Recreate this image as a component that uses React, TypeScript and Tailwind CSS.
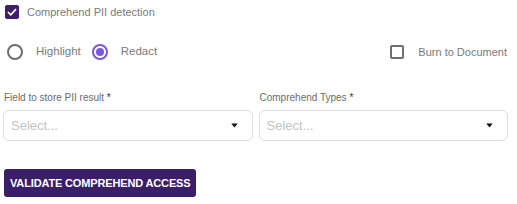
import React from 'react';

const Caret = () => (
    <svg width="7" height="5" viewBox="0 0 7 5" className="shrink-0">
        <path d="M0.3 0.5h6.4L3.5 4.6z" fill="#111" />
    </svg>
);

type SelectBoxProps = {
    label: string;
};

const SelectBox: React.FC<SelectBoxProps> = ({ label }) => (
    <div className="flex flex-col">
        <label className="h-[10px] text-[10px] text-[#6b6b6b] leading-none mb-[7px] pl-[1px]">
            {label} <span className="text-[#333]">*</span>
        </label>
        <div className="h-[31px] rounded-[6px] border border-[#dcdcdc] bg-white flex items-center justify-between pl-[7px] pr-[14px]">
            <span className="text-[13px] text-[#c4c4c4]">Select...</span>
            <Caret />
        </div>
    </div>
);

export default function App() {
    return (
        <div className="w-[517px] h-[204px] bg-white font-['Liberation_Sans',Arial,sans-serif] pl-[3px] pr-[9px] pt-[5px]">
            <div className="flex items-center h-[14px] gap-[8px] pl-[2px]">
                <span className="w-[14px] h-[14px] rounded-[2px] bg-[#3e1f6c] flex items-center justify-center">
                    <svg width="10" height="8" viewBox="0 0 10 8">
                        <path d="M1 4l2.8 2.8L9 1.2" stroke="white" strokeWidth="1.7" fill="none" />
                    </svg>
                </span>
                <span className="text-[11px] leading-none text-[#7a7a7a]">Comprehend PII detection</span>
            </div>

            <div className="flex items-center h-[16px] mt-[25px] pl-[4px]">
                <span className="w-[16px] h-[16px] rounded-full border-2 border-[#6e6e6e]" />
                <span className="text-[11.5px] leading-none text-[#7a7a7a] ml-[13px]">Highlight</span>
                <span className="w-[16px] h-[16px] rounded-full border-2 border-[#7b57d8] flex items-center justify-center ml-[11px]">
                    <span className="w-[8px] h-[8px] rounded-full bg-[#7b57d8]" />
                </span>
                <span className="text-[11.5px] leading-none text-[#7a7a7a] ml-[13px]">Redact</span>
                <span className="ml-auto w-[14px] h-[14px] rounded-[2px] border-2 border-[#6e6e6e]" />
                <span className="text-[11px] leading-none text-[#7a7a7a] ml-[14px] mr-[1px]">Burn to Document</span>
            </div>

            <div className="grid grid-cols-2 gap-[6px] mt-[33px]">
                <SelectBox label="Field to store PII result" />
                <SelectBox label="Comprehend Types" />
            </div>

            <button className="mt-[28px] ml-[1px] h-[28px] px-[6px] rounded-[3px] bg-[#3b1e68] text-white text-[11px] font-semibold leading-none tracking-[-0.15px]">
                VALIDATE COMPREHEND ACCESS
            </button>
        </div>
    );
}
